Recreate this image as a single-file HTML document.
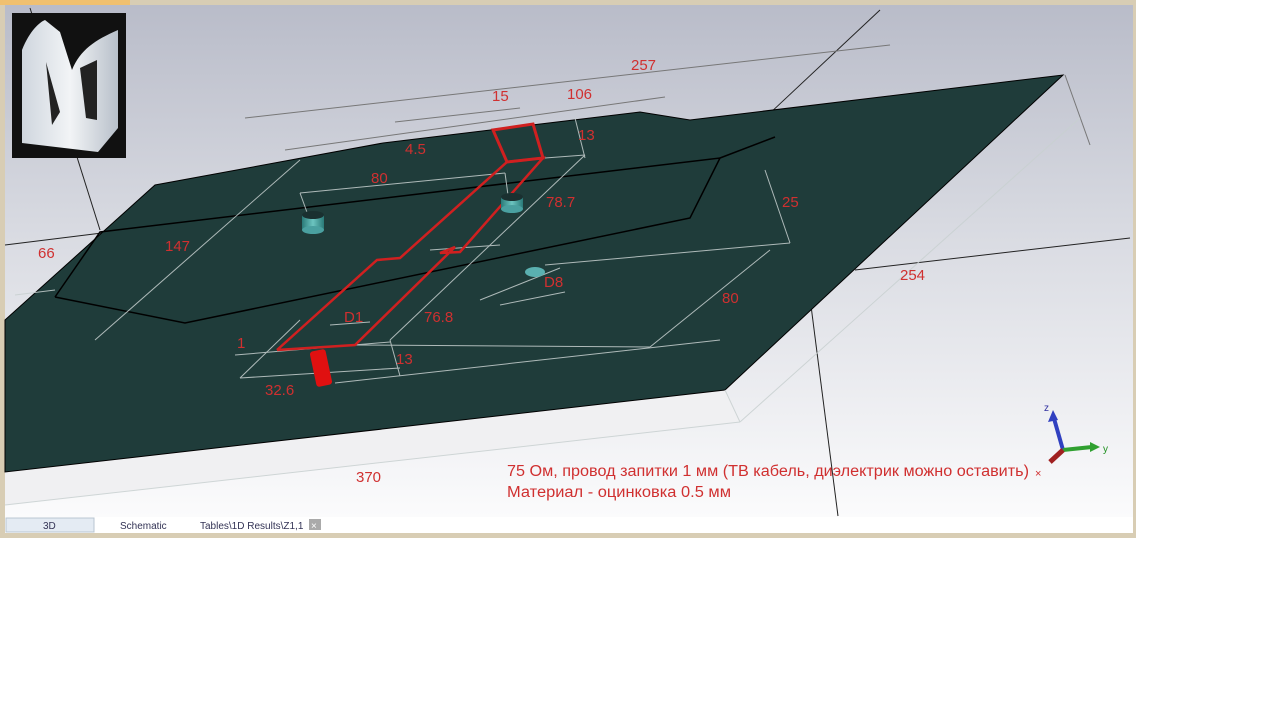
<!DOCTYPE html>
<html><head><meta charset="utf-8"><style>
body{margin:0;width:1280px;height:720px;background:#fff;overflow:hidden;font-family:"Liberation Sans",sans-serif}
</style></head><body>
<svg width="1280" height="720" style="position:absolute;left:0;top:0" font-family="Liberation Sans, DejaVu Sans, sans-serif">
<defs>
<linearGradient id="bg" x1="0" y1="0" x2="0" y2="1">
<stop offset="0" stop-color="#b9bcc9"/><stop offset="0.45" stop-color="#d9dbe2"/><stop offset="1" stop-color="#fbfbfc"/>
</linearGradient>
<linearGradient id="cyl" x1="0" y1="0" x2="1" y2="0"><stop offset="0" stop-color="#2a7a78"/><stop offset="0.5" stop-color="#6cc4c0"/><stop offset="1" stop-color="#2a7a78"/></linearGradient>
<linearGradient id="th" x1="0" y1="0" x2="1" y2="0"><stop offset="0" stop-color="#cfd6de"/><stop offset="0.5" stop-color="#f2f4f6"/><stop offset="1" stop-color="#b8c0ca"/></linearGradient>
</defs>
<rect x="0" y="0" width="1136" height="538" fill="#d8cdb4"/>
<rect x="0" y="0" width="130" height="5" fill="#f0c070"/>
<rect x="5" y="5" width="1128" height="512" fill="url(#bg)"/>
<g stroke="#222" stroke-width="1" fill="none">
<line x1="30" y1="8" x2="100" y2="230"/>
<line x1="880" y1="10" x2="720" y2="160"/>
<line x1="5" y1="245" x2="110" y2="232"/>
<line x1="855" y1="270" x2="1130" y2="238"/>
<line x1="800" y1="220" x2="838" y2="516"/>
</g>
<g stroke="#777" stroke-width="1" fill="none">
<line x1="245" y1="118" x2="890" y2="45"/>
<line x1="285" y1="150" x2="665" y2="97"/>
<line x1="395" y1="122" x2="520" y2="108"/>
<line x1="1065" y1="75" x2="1090" y2="145"/>
<line x1="30" y1="300" x2="160" y2="185"/>
</g>
<polygon points="5,472 725,390 740,422 5,505" fill="#f0f0f2"/>
<polygon points="5,320 155,185 383,143 640,112 690,120 1063,75 725,390 5,472" fill="#1f3c3a" stroke="#000" stroke-width="1"/>
<g stroke="#000" stroke-width="1.5" fill="none">
<polyline points="55,297 185,323 690,218 720,158 100,232 55,297"/>
<line x1="720" y1="158" x2="775" y2="137"/>
</g>
<g stroke="#c8d0d0" stroke-width="1" fill="none" opacity="0.85">
<line x1="300" y1="193" x2="505" y2="173"/>
<line x1="300" y1="193" x2="308" y2="215"/>
<line x1="505" y1="173" x2="508" y2="195"/>
<line x1="545" y1="158" x2="585" y2="155"/>
<line x1="575" y1="118" x2="585" y2="158"/>
<line x1="585" y1="155" x2="390" y2="340"/>
<line x1="430" y1="250" x2="500" y2="245"/>
<line x1="545" y1="265" x2="790" y2="243"/>
<line x1="765" y1="170" x2="790" y2="243"/>
<line x1="480" y1="300" x2="560" y2="268"/>
<line x1="500" y1="305" x2="565" y2="292"/>
<line x1="355" y1="345" x2="650" y2="347"/>
<line x1="650" y1="347" x2="770" y2="250"/>
<line x1="240" y1="378" x2="400" y2="368"/>
<line x1="335" y1="383" x2="720" y2="340"/>
<line x1="390" y1="340" x2="400" y2="376"/>
<line x1="235" y1="355" x2="390" y2="342"/>
<line x1="240" y1="378" x2="300" y2="320"/>
<line x1="330" y1="325" x2="370" y2="322"/>
<line x1="95" y1="340" x2="300" y2="160"/>
<line x1="15" y1="295" x2="55" y2="290"/>
<line x1="5" y1="505" x2="740" y2="422"/>
<line x1="725" y1="390" x2="740" y2="422"/>
<line x1="740" y1="422" x2="1080" y2="118"/>
</g>
<g stroke="#d02020" stroke-width="2.5" fill="none">
<polyline points="277,350 377,260 400,258 507,162 543,158 460,252 440,253 455,247 355,345 277,350"/>
<polygon points="493,130 533,124 543,158 507,162" stroke-width="3"/>
</g>
<rect x="313" y="350" width="16" height="36" rx="3" fill="#e01010" transform="rotate(-12 321 368)"/>
<g>
<rect x="302" y="215" width="22" height="15" fill="url(#cyl)"/><ellipse cx="313" cy="215" rx="11" ry="4" fill="#1a3030"/><ellipse cx="313" cy="230" rx="11" ry="4" fill="#4aa0a0"/>
<rect x="501" y="197" width="22" height="12" fill="url(#cyl)"/><ellipse cx="512" cy="197" rx="11" ry="4" fill="#1a3030"/><ellipse cx="512" cy="209" rx="11" ry="4" fill="#4aa0a0"/>
<ellipse cx="535" cy="272" rx="10" ry="5" fill="#5ab0b0"/>
</g>
<g fill="#d03030" font-size="15">
<text x="631" y="70">257</text><text x="492" y="101">15</text><text x="567" y="99">106</text>
<text x="405" y="154">4.5</text><text x="578" y="140">13</text><text x="371" y="183">80</text>
<text x="546" y="207">78.7</text><text x="782" y="207">25</text><text x="38" y="258">66</text>
<text x="165" y="251">147</text><text x="900" y="280">254</text><text x="544" y="287">D8</text>
<text x="722" y="303">80</text><text x="344" y="322">D1</text><text x="424" y="322">76.8</text>
<text x="237" y="348">1</text><text x="396" y="364">13</text><text x="265" y="395">32.6</text>
<text x="356" y="482">370</text>
<text x="507" y="476" font-size="15.3" textLength="522" lengthAdjust="spacingAndGlyphs">75 Ом, провод запитки 1 мм (ТВ кабель, диэлектрик можно оставить)</text>
<text x="1035" y="477" font-size="11">×</text>
<text x="507" y="497" font-size="15.3" textLength="224" lengthAdjust="spacingAndGlyphs">Материал - оцинковка 0.5 мм</text>
</g>
<g>
<line x1="1063" y1="450" x2="1053" y2="415" stroke="#3040c0" stroke-width="4"/>
<polygon points="1053,410 1048,422 1058,420" fill="#3040c0"/>
<line x1="1063" y1="450" x2="1092" y2="447" stroke="#30a030" stroke-width="4"/>
<polygon points="1100,447 1090,442 1090,452" fill="#30a030"/>
<line x1="1063" y1="450" x2="1050" y2="462" stroke="#a02020" stroke-width="5"/>
<text x="1044" y="411" font-size="10" fill="#3030a0">z</text>
<text x="1103" y="452" font-size="10" fill="#209020">y</text>
</g>
<rect x="12" y="13" width="114" height="145" fill="#111"/>
<path d="M22,50 C30,30 40,22 45,20 L60,32 L72,70 C80,50 95,40 118,30 L118,128 L98,152 L22,143 Z" fill="url(#th)"/>
<path d="M46,62 L52,125 L60,112 Z M80,68 L97,60 L97,120 L86,118 Z" fill="#222"/>
<rect x="5" y="517" width="1128" height="16" fill="#fff"/>
<rect x="6" y="518" width="88" height="14" fill="#e4ebf3" stroke="#b8c4d0"/>
<g font-size="10" fill="#335">
<text x="43" y="529">3D</text><text x="120" y="529">Schematic</text><text x="200" y="529">Tables\1D Results\Z1,1</text>
</g>
<rect x="309" y="519" width="12" height="11" fill="#aaa"/>
<text x="311" y="529" font-size="10" fill="#fff">×</text>
</svg>
</body></html>
